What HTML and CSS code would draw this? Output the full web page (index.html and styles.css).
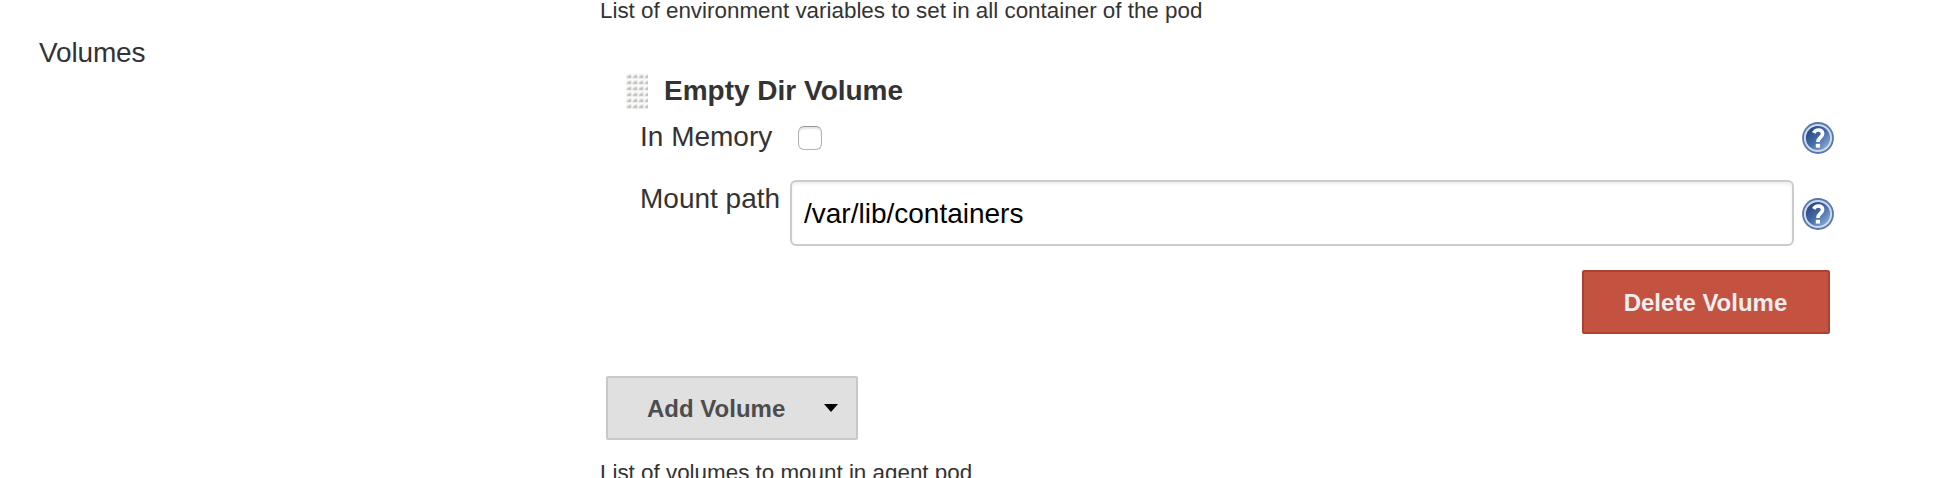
FILE: index.html
```html
<!DOCTYPE html>
<html lang="en">
<head>
<meta charset="utf-8">
<title>Volumes</title>
<link rel="stylesheet" href="styles.css">
</head>
<body>
<svg class="defs" width="0" height="0" aria-hidden="true">
  <defs>
    <linearGradient id="disc" x1="0" y1="0" x2="1" y2="1">
      <stop offset="0.2" stop-color="#2b4c88"/>
      <stop offset="0.5" stop-color="#456aa5"/>
      <stop offset="0.9" stop-color="#8fb0d8"/>
    </linearGradient>
    <symbol id="help" viewBox="0 0 32 32">
      <circle cx="16" cy="16" r="15.9" fill="#5878ac"/>
      <circle cx="16" cy="16" r="13.1" fill="url(#disc)" stroke="#cdd9ea" stroke-width="2"/>
      <path d="M11.700 10.800C12.800 8.700 14.500 8 16.300 8c2.700 0 4.300 1.500 4.300 3.800 0 3.700-4.700 3.700-4.700 8.200" fill="none" stroke="#fff" stroke-width="3.700"/>
      <rect x="13.800" y="21.800" width="4.200" height="3.800" fill="#fff"/>
    </symbol>
    <pattern id="dots" width="6" height="6" patternUnits="userSpaceOnUse">
      <rect width="6" height="6" fill="#fafaf9"/>
      <path d="M0.500 5.500V3.500L3 1.500H5.500V5.500Z" fill="#e0e0de"/>
      <path d="M1.500 5V4L3 2.500H5V5Z" fill="#c4c4c2"/>
    </pattern>
  </defs>
</svg>
<main class="form">
  <div class="label volumes">Volumes</div>
  <div class="content">
    <p class="description env">List of environment variables to set in all container of the pod</p>
    <section class="volume">
      <header class="heading">
        <svg class="grip" width="22" height="36"><rect width="22" height="36" fill="url(#dots)"/></svg>
        <h2 class="title">Empty Dir Volume</h2>
      </header>
      <div class="row memory">
        <label class="name" for="memory">In Memory</label>
        <div class="field"><input class="check" id="memory" type="checkbox"></div>
        <svg class="help" width="32" height="32"><use href="#help"/></svg>
      </div>
      <div class="row mount">
        <label class="name mount-name" for="path">Mount path</label>
        <input class="text" id="path" type="text" value="/var/lib/containers">
        <svg class="help" width="32" height="32"><use href="#help"/></svg>
      </div>
      <div class="actions"><button class="button delete">Delete Volume</button></div>
    </section>
    <button class="button add"><span class="caption">Add Volume</span><svg width="14" height="8"><path d="M0 0H14L7 8Z"/></svg></button>
    <p class="description list">List of volumes to mount in agent pod</p>
  </div>
</main>
</body>
</html>
```
FILE: styles.css
```css
* { box-sizing: border-box; }
body {
  margin: 0;
  height: 478px;
  overflow: hidden;
  background: #fff;
  color: #333;
  font: 28px/35px "Liberation Sans", Helvetica, Arial, sans-serif;
}
.defs { display: block; }
.form {
  display: grid;
  grid-template-columns: 561px 1234px;
  padding-left: 39px;
}
.label { padding-top: 35px; }
.volumes { letter-spacing: -0.15px; }
.content { min-width: 0; }
.description { margin: 0; height: 25px; font-size: 22.4px; line-height: 25px; white-space: nowrap; }
.env { margin-top: -2px; }
.volume { margin-top: 49px; padding-left: 26px; }
.heading { display: flex; height: 42px; gap: 16px; }
.grip { flex: none; margin-top: 1px; }
.title { margin: 1px 0 0; font-size: 28px; line-height: 35px; font-weight: bold; white-space: nowrap; }
.row { display: grid; grid-template-columns: 150px 1012px 32px; height: 66px; padding-left: 14px; }
.memory { padding-top: 5px; }
.mount { align-items: center; }
.name { white-space: nowrap; }
.mount-name { align-self: start; padding-top: 1px; }
.field { display: flex; padding: 7px 0 0 8px; }
.check {
  appearance: none;
  width: 24px;
  height: 24px;
  margin: 0;
  border: 1px solid #b4b4b4;
  border-top-color: #969696;
  border-radius: 6px;
  background: #fff;
  box-shadow: inset 0 2px 2px #e4e4e4;
}
.help { display: block; }
.memory .help { margin-top: 3px; }
.mount .help { margin-top: 2px; }
.text {
  width: 1004px;
  height: 66px;
  margin: 0;
  padding: 1px 12px 0;
  border: 2px solid #ccc;
  border-radius: 6px;
  background: #fff;
  box-shadow: inset 0 2px 3px #eee;
  color: #000;
  font: inherit;
}
.actions { display: flex; justify-content: flex-end; padding: 24px 4px 0 0; }
.button {
  height: 64px;
  margin: 0;
  border: 2px solid;
  border-radius: 2px;
  font: bold 24px/28px "Liberation Sans", Helvetica, Arial, sans-serif;
  white-space: nowrap;
}
.delete { width: 248px; padding: 1px 1px 0 0; border-color: #ad4130; background: #c45241; color: #eee; }
.add {
  display: flex;
  align-items: center;
  justify-content: space-between;
  width: 252px;
  margin: 42px 0 0 6px;
  padding: 0 18px 0 39px;
  border-color: #c8c8c8;
  background: #e0e0e0;
  color: #4d4d4d;
}
.caption { padding-top: 2px; }
.add svg { fill: #000; }
.list { margin-top: 20px; }
```
